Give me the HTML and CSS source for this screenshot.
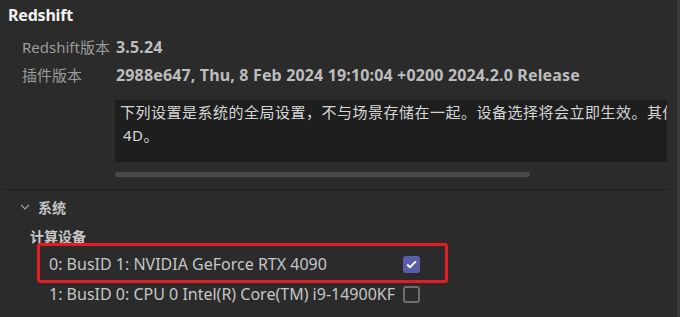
FILE: index.html
```html
<!DOCTYPE html>
<html lang="zh-CN">
<head>
<meta charset="utf-8">
<link rel="stylesheet" href="styles.css">
</head>
<body>
<div class="page">
  <div class="main">
    <div class="title">Redshift</div>
    <div class="info">
      <div class="label">Redshift版本</div><div class="value">3.5.24</div>
      <div class="label">插件版本</div><div class="value">2988e647, Thu, 8 Feb 2024 19:10:04 +0200 2024.2.0 Release</div>
    </div>
    <div class="notebox">
      <div class="noteline">下列设置是系统的全局设置，不与场景存储在一起。设备选择将会立即生效。其他</div>
      <div class="noteline indent">4D。</div>
    </div>
    <div class="hscroll"><div class="thumb"></div></div>
    <div class="sep"></div>
    <div class="section">
      <svg class="chev" width="10" height="6" viewBox="0 0 10 6"><path d="M1 0.8 L5 4.8 L9 0.8" fill="none" stroke="#a8a8a8" stroke-width="1.2"/></svg>
      <span>系统</span>
    </div>
    <div class="group">计算设备</div>
    <div class="devices">
      <div class="highlight"></div>
      <div class="device first">
        <span class="dname">0: BusID 1: NVIDIA GeForce RTX 4090</span>
        <span class="cb checked"><svg width="11" height="9" viewBox="0 0 11 9"><path d="M1.2 4.6 L4 7.2 L9.8 1.4" fill="none" stroke="#fff" stroke-width="2"/></svg></span>
      </div>
      <div class="device">
        <span class="dname">1: BusID 0: CPU 0 Intel(R) Core(TM) i9-14900KF</span>
        <span class="cb"></span>
      </div>
    </div>
  </div>
  <div class="vbar"></div>
</div>
</body>
</html>
```

FILE: styles.css
```css
html, body {
  margin: 0;
  padding: 0;
  background: #2b2b2b;
  width: 680px;
  height: 317px;
  overflow: hidden;
}
.page {
  display: flex;
  width: 680px;
  height: 317px;
  font-family: "Noto Sans", "Noto Sans CJK SC", sans-serif;
  color: #c8c8c8;
}
.main {
  flex: 1;
  position: relative;
}
.vbar {
  width: 3px;
  background: #3a3a3a;
}
.title {
  margin: 3px 0 0 8px;
  font-size: 16px;
  font-weight: 700;
  color: #f2f2f2;
  line-height: 24px;
  letter-spacing: -0.2px;
}
.info {
  display: grid;
  grid-template-columns: 94px auto;
  margin: 6px 0 0 22px;
  line-height: 28px;
}
.label {
  color: #9c9c9c;
  font-size: 15px;
}
.value {
  color: #bdbdbd;
  font-weight: 700;
  font-size: 16px;
  letter-spacing: 0.15px;
}
.notebox {
  margin: 11px 0 0 115px;
  width: 552px;
  height: 62px;
  background: #1e1e1e;
  overflow: hidden;
  padding: 1px 0 0 5px;
  box-sizing: border-box;
  font-size: 15px;
  letter-spacing: 0.5px;
  line-height: 23px;
  color: #d6d6d6;
}
.noteline {
  white-space: nowrap;
}
.noteline.indent {
  padding-left: 3px;
}
.hscroll {
  margin: 10px 0 0 115px;
  width: 552px;
  height: 5px;
}
.thumb {
  width: 415px;
  height: 5px;
  border-radius: 3px;
  background: #4a4a4a;
}
.sep {
  margin: 12px 0 0 4px;
  width: 665px;
  height: 1px;
  background: #1e1e1e;
}
.section {
  display: flex;
  align-items: center;
  margin: 6px 0 0 20px;
  height: 22px;
  font-size: 14px;
  font-weight: 700;
  color: #c4c4c4;
}
.chev {
  margin-right: 8px;
}
.group {
  margin: 9px 0 0 30px;
  font-size: 14px;
  font-weight: 700;
  color: #c8c8c8;
  line-height: 20px;
}
.devices {
  position: relative;
  margin: 0 0 0 37px;
  width: 411px;
}
.highlight {
  position: absolute;
  left: 0;
  top: -4px;
  width: 411px;
  height: 40px;
  box-sizing: border-box;
  border: 3px solid #e21b24;
  border-radius: 3px;
}
.device {
  display: flex;
  align-items: center;
  justify-content: space-between;
  height: 26px;
  padding: 0 28px 0 12px;
  font-size: 16px;
  color: #c6c6c6;
}
.device.first {
  height: 34px;
}
.cb {
  width: 17px;
  height: 17px;
  box-sizing: border-box;
  border: 2px solid #6e6e6e;
  border-radius: 3px;
  display: flex;
  align-items: center;
  justify-content: center;
}
.cb.checked {
  border: none;
  background: #5a5ea8;
}
```
